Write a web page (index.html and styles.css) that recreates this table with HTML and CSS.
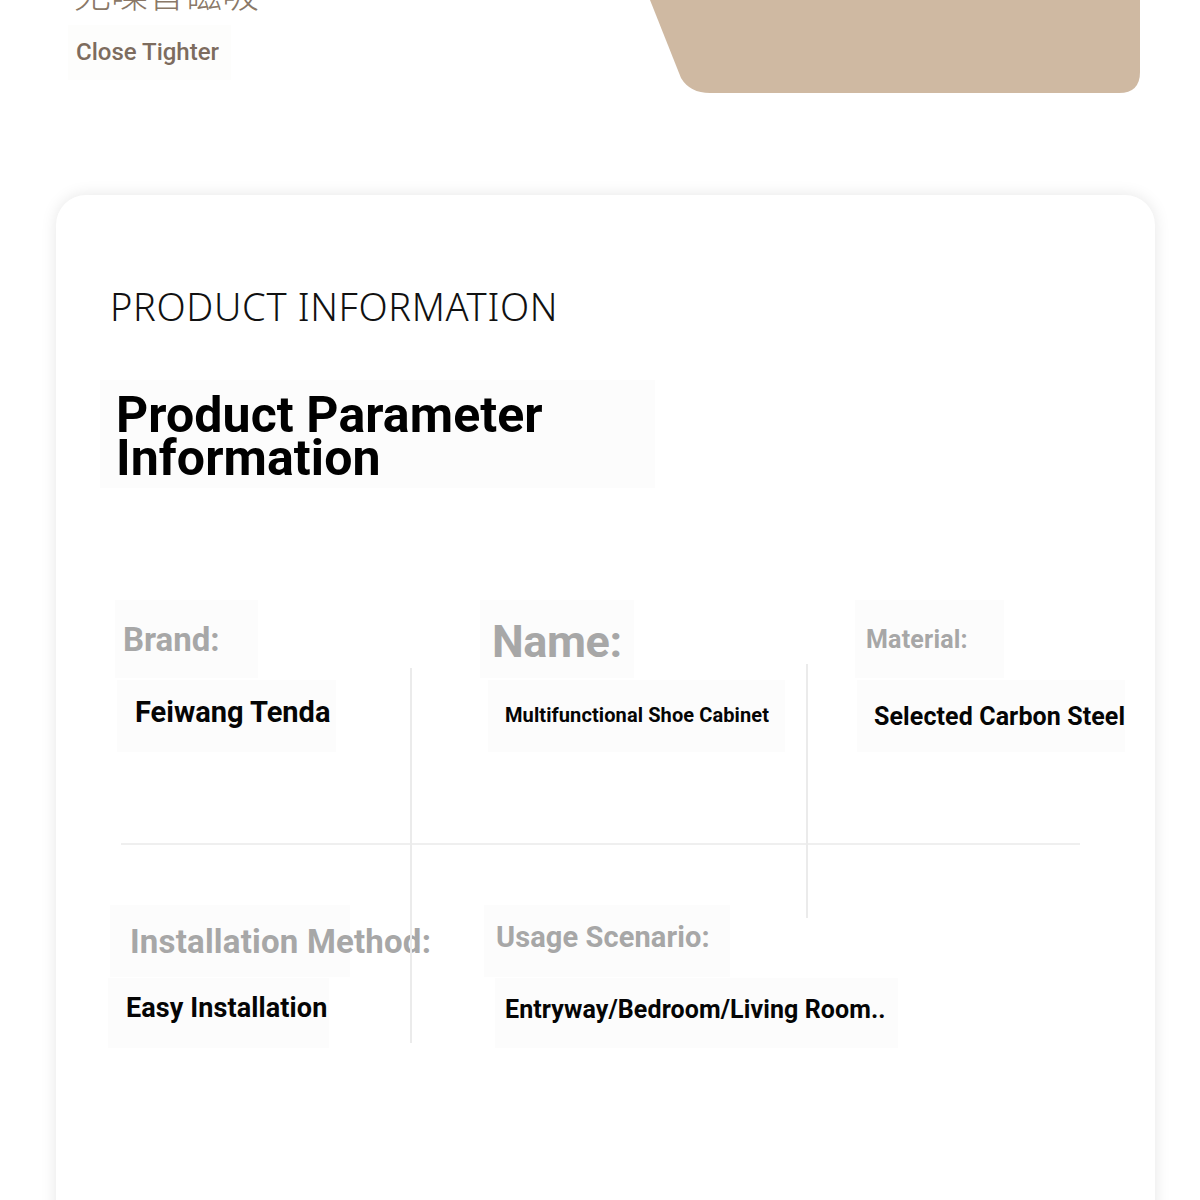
FILE: index.html
```html
<!DOCTYPE html>
<html lang="en">
<head>
<meta charset="utf-8">
<title>Product Information</title>
<link rel="stylesheet" href="styles.css">
</head>
<body>
<header class="top">
  <div class="top-text">
    <div class="cn-title">无噪音磁吸</div>
    <div class="en-sub">Close Tighter</div>
  </div>
  <svg class="tan-shape" width="490" height="93" viewBox="0 0 490 93" aria-hidden="true">
    <path d="M0 0 H490 V72 Q490 93 469 93 H60 Q40 93 31 78 Z" fill="#cfb9a2"/>
  </svg>
</header>

<main class="card">
  <h2 class="section-title">PRODUCT INFORMATION</h2>
  <div class="param-heading"><h1>Product Parameter<br>Information</h1></div>

  <section class="params">
    <div class="row row-1">
      <div class="cell c-brand">
        <div class="label l-brand">Brand:</div>
        <div class="value v-brand">Feiwang Tenda</div>
      </div>
      <div class="cell c-name">
        <div class="label l-name">Name:</div>
        <div class="value v-name">Multifunctional Shoe Cabinet</div>
      </div>
      <div class="cell c-material">
        <div class="label l-material">Material:</div>
        <div class="value v-material">Selected Carbon Steel</div>
      </div>
    </div>
    <div class="divider"></div>
    <div class="row row-2">
      <div class="cell c-install">
        <div class="label l-install">Installation Method:</div>
        <div class="value v-install">Easy Installation</div>
      </div>
      <div class="cell c-usage">
        <div class="label l-usage">Usage Scenario:</div>
        <div class="value v-usage">Entryway/Bedroom/Living Room..</div>
      </div>
    </div>
    <span class="vline vline-1"></span>
    <span class="vline vline-2"></span>
  </section>
</main>
</body>
</html>
```

FILE: styles.css
```css
* { box-sizing: border-box; }

html, body {
  margin: 0;
  padding: 0;
  background: #ffffff;
  overflow: hidden;
}

body {
  font-family: Roboto, "Liberation Sans", sans-serif;
  width: 1200px;
  height: 1200px;
}

/* ---------- header ---------- */
.top {
  display: flex;
  align-items: flex-start;
  height: 93px;
}

.top-text {
  padding-left: 68px;
  display: flex;
  flex-direction: column;
  align-items: flex-start;
}

.cn-title {
  margin-top: -26px;
  padding-left: 6px;
  font-family: "Noto Sans CJK SC", "Noto Sans", sans-serif;
  font-weight: 300;
  font-size: 37px;
  line-height: 1;
  color: #8a7867;
}

.en-sub {
  margin-top: 14px;
  padding: 15px 12px 16px 8px;
  background: #fdfdfc;
  font-family: Roboto, sans-serif;
  font-weight: 500;
  font-size: 24px;
  line-height: 1;
  color: #7d6c5e;
}

.tan-shape {
  display: block;
  margin-left: auto;
  margin-right: 60px;
}

/* ---------- card ---------- */
.card {
  margin: 102px 0 0 56px;
  width: 1099px;
  min-height: 1100px;
  background: #ffffff;
  border-radius: 30px;
  box-shadow: 0 0 16px rgba(0, 0, 0, 0.1);
  padding: 92px 0 0 54px;
}

.section-title {
  margin: 0;
  font-family: "Noto Sans", sans-serif;
  font-weight: 300;
  font-size: 38px;
  line-height: 38px;
  letter-spacing: 0.65px;
  color: #111111;
}

.param-heading {
  margin: 55px 0 0 -10px;
  width: 555px;
  padding: 14px 0 8px 16px;
  background: #fcfcfc;
}

.param-heading h1 {
  margin: 0;
  font-family: Roboto, sans-serif;
  font-weight: 700;
  font-size: 50px;
  line-height: 43px;
  color: #000000;
  letter-spacing: 0.1px;
}

/* ---------- params ---------- */
.params {
  position: relative;
  margin: 112px 0 0 0;
  width: 1000px;
}

.row {
  display: grid;
  grid-template-columns: 370px 375px 255px;
}

.cell {
  display: flex;
  flex-direction: column;
  align-items: flex-start;
}

.label {
  font-family: Roboto, sans-serif;
  font-weight: 700;
  line-height: 1;
  color: #a7a7a7;
  background: #fcfcfc;
  white-space: nowrap;
}

.value {
  font-family: Roboto, sans-serif;
  font-weight: 700;
  line-height: 1;
  color: #050505;
  background: #fcfcfc;
  white-space: nowrap;
}

.row-1 .label { height: 78px; }
.row-1 .value { height: 72px; margin-top: 2px; }
.row-2 .label { height: 72px; }
.row-2 .value { height: 70px; margin-top: 1px; }

/* row 1 */
.l-brand { font-size: 33px; margin-left: 5px; padding: 23px 38px 0 8px; }
.v-brand { font-size: 29px; margin-left: 7px; padding: 18px 6px 0 18px; }

.l-name { font-size: 45px; letter-spacing: -0.4px; padding: 19px 12px 0 12px; }
.v-name { font-size: 20px; margin-left: 8px; padding: 25px 16px 0 17px; letter-spacing: 0.1px; }

.l-material { font-size: 25px; letter-spacing: 0.2px; padding: 27px 36px 0 11px; }
.v-material { font-size: 25px; margin-left: 2px; padding: 24px 0 0 17px; letter-spacing: 0.1px; }

.divider {
  margin: 91px 0 0 11px;
  width: 959px;
  height: 2px;
  background: #efefef;
}

.row-2 { margin-top: 60px; }

/* row 2 */
.l-install { font-size: 33px; letter-spacing: 0.2px; padding: 20px 0 0 20px; width: 240px; overflow: visible; }
.v-install { font-size: 27px; margin-left: -2px; padding: 17px 2px 0 18px; letter-spacing: 0.1px; }

.l-usage { font-size: 29px; margin-left: 4px; padding: 18px 20px 0 12px; letter-spacing: 0.1px; }
.v-usage { font-size: 25px; margin-left: 15px; padding: 19px 12px 0 10px; letter-spacing: 0.1px; }

/* overlay grid lines */
.vline {
  position: absolute;
  width: 2px;
  background: #ebebeb;
}
.vline-1 { left: 300px; top: 68px; height: 375px; }
.vline-2 { left: 696px; top: 64px; height: 254px; }
```
